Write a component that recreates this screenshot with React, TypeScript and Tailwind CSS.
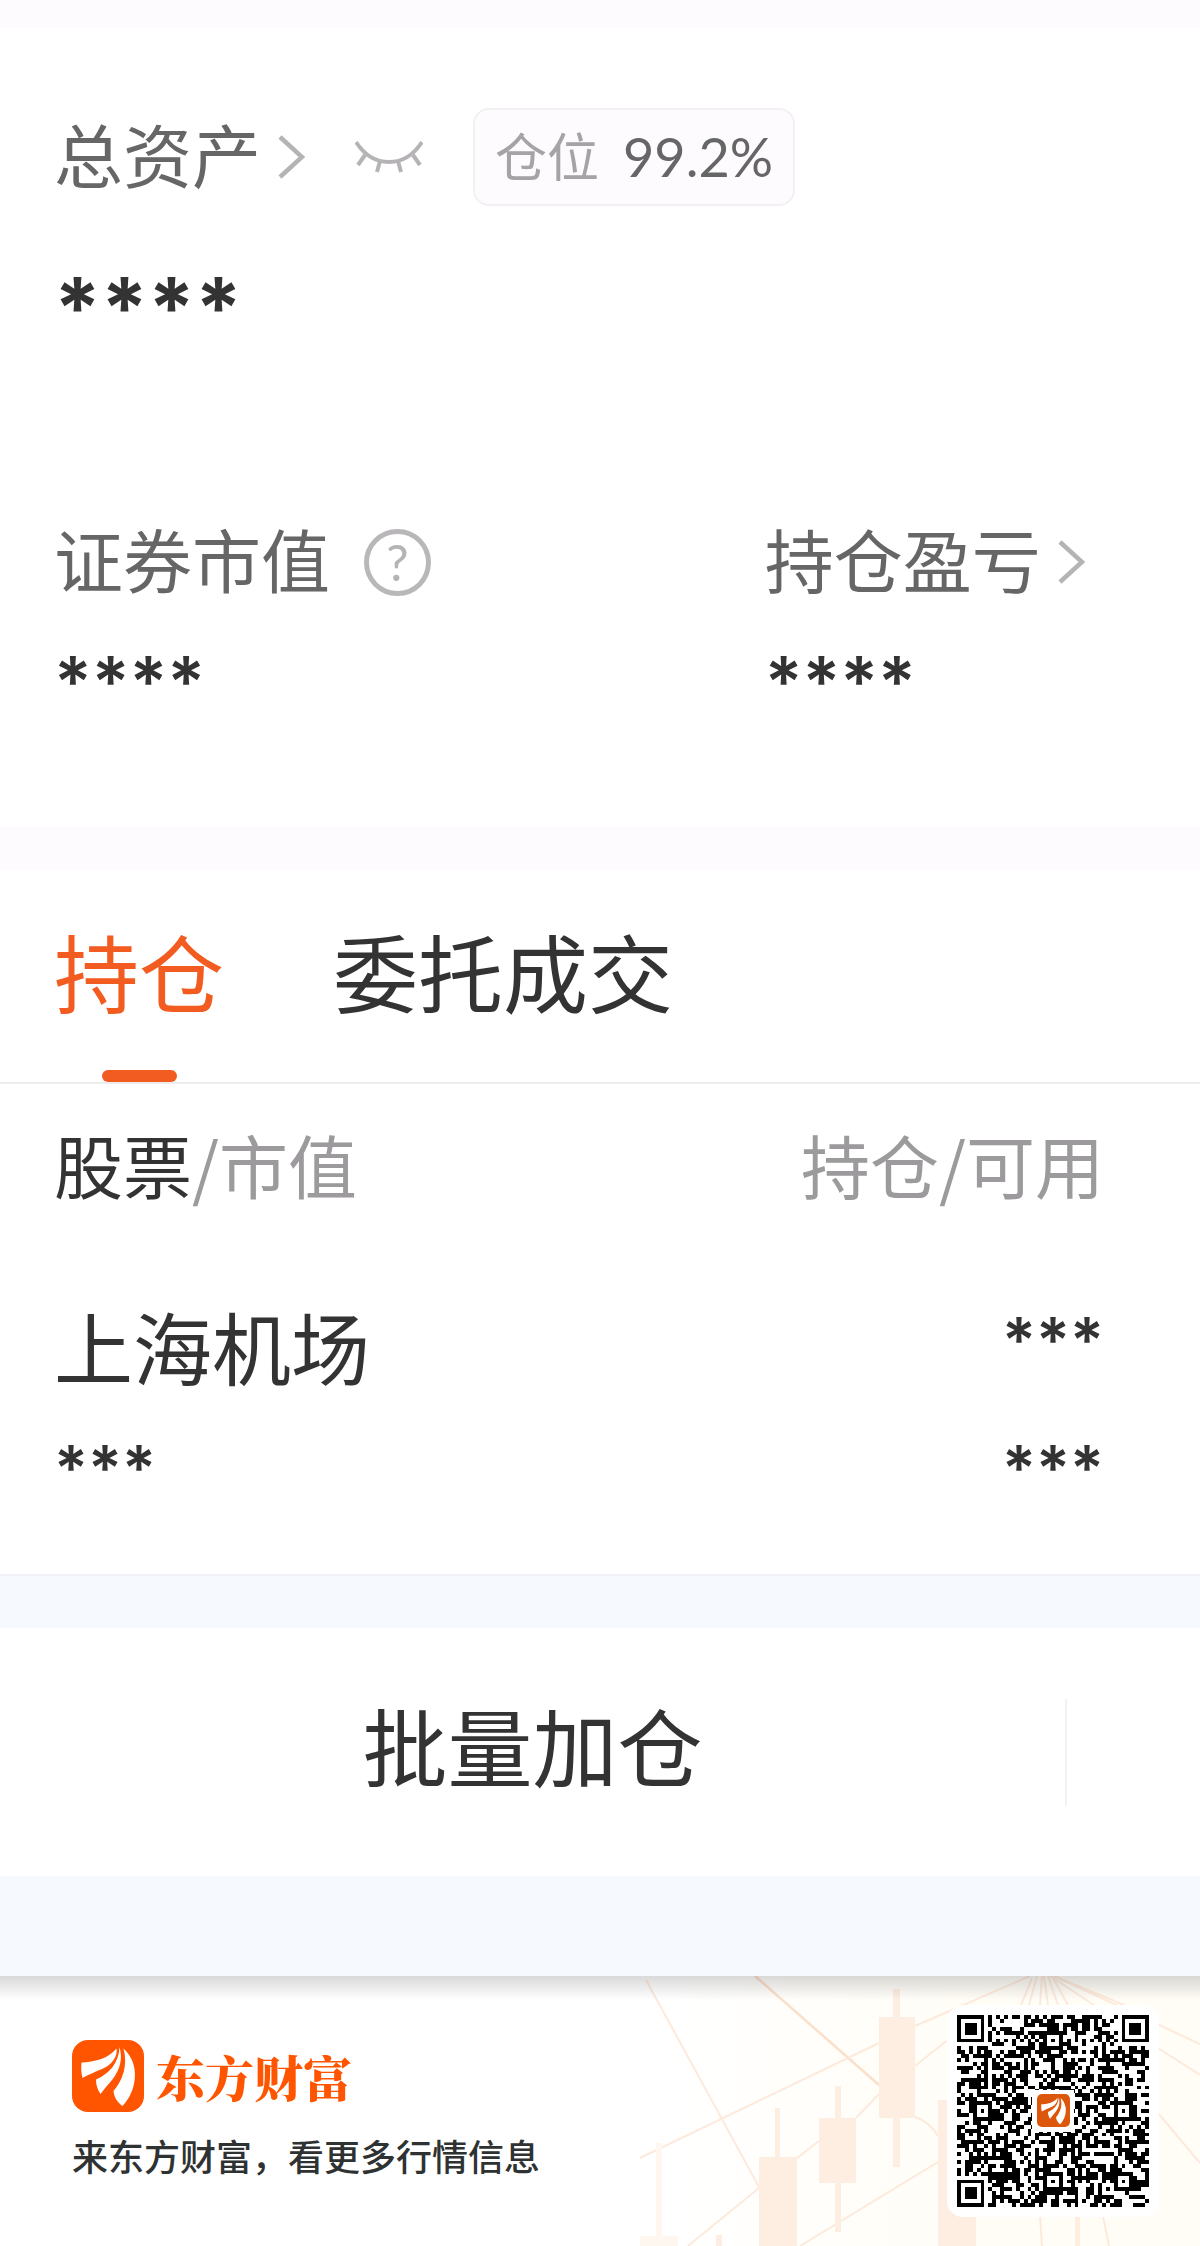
const QR_SIZE = 49;

function inSquare(x: number, y: number, cx: number, cy: number, r: number) {
  return Math.max(Math.abs(x - cx), Math.abs(y - cy)) <= r;
}

function isDark(x: number, y: number) {
  // finder patterns
  for (const [cx, cy] of [[3, 3], [45, 3], [3, 45]]) {
    if (inSquare(x, y, cx, cy, 4)) {
      const d = Math.max(Math.abs(x - cx), Math.abs(y - cy));
      return d !== 4 && d !== 2;
    }
  }
  // alignment patterns
  for (const [cx, cy] of [[24, 6], [6, 24], [42, 24], [24, 42], [42, 42]]) {
    if (inSquare(x, y, cx, cy, 2)) {
      return Math.max(Math.abs(x - cx), Math.abs(y - cy)) !== 1;
    }
  }
  if (x === 6 || y === 6) return (x + y) % 2 === 0;
  let h = (x * 374761393 + y * 668265263 + 1013) | 0;
  h = Math.imul(h ^ (h >>> 13), 1274126177);
  return ((h ^ (h >>> 16)) & 255) < 130;
}

function qrPath() {
  let d = "";
  for (let y = 0; y < QR_SIZE; y++) {
    for (let x = 0; x < QR_SIZE; x++) {
      if (isDark(x, y)) d += `M${x} ${y}h1v1h-1z`;
    }
  }
  return d;
}

function Feathers() {
  return (
    <g fill="#fff">
      <path d="M9.500 22.500C22 22 36 19 44.500 8.500C46 16 40 25 30 29C23 32 18 34 10.500 38C9 33 9 27 9.500 22.500Z" />
      <path d="M47.500 7C51 19 48 30 40 40C36 45 32 49 28.500 54C25.500 50 24 45 24 39.500C37 34 47 23 47.500 7Z" />
      <path d="M51.500 8.500C61 17 65 30 62 44C60 53 56 60 50.500 66C45 62 42 57 41.500 51C51 40 56 25 51.500 8.500Z" />
    </g>
  );
}

function Logo() {
  return (
    <svg viewBox="0 0 72 72" className="h-18 w-18 shrink-0" aria-hidden="true">
      <rect width="72" height="72" rx="16" fill="#ff5500" />
      <Feathers />
    </svg>
  );
}

function QrCode() {
  return (
    <div className="rounded-2xl bg-white p-[10px]">
      <svg viewBox="0 0 192 192" className="h-48 w-48" role="img" aria-label="二维码">
        <path d={qrPath()} transform="scale(3.918)" shapeRendering="crispEdges" />
        <rect x="75" y="75" width="42" height="42" fill="#fff" />
        <g transform="translate(80 79) scale(0.458)">
          <rect width="72" height="72" rx="11" fill="#dc560c" />
          <Feathers />
        </g>
      </svg>
    </div>
  );
}

function Chevron() {
  return (
    <svg viewBox="0 0 28 44" className="h-11 w-7" fill="none" stroke="#b5b3b5" strokeWidth="4.500" aria-hidden="true">
      <path d="M3 2L25 22L3 42" />
    </svg>
  );
}

function ClosedEye() {
  return (
    <svg viewBox="0 0 68 34" className="h-[34px] w-[68px]" fill="none" stroke="#b5b3b5" strokeWidth="4" aria-hidden="true">
      <path d="M1 2C10 16 21 22 34 22S58 16 67 2" />
      <path d="M10 15L3 25M25 21L22 32M43 21L46 32M58 15L65 25" />
    </svg>
  );
}

function FooterArt() {
  return (
    <svg viewBox="0 0 600 270" className="absolute right-0 top-0 h-full w-[600px]" aria-hidden="true">
      <defs>
        <linearGradient id="warm" x1="0" x2="1" y1="0" y2="0">
          <stop offset="0.100" stopColor="#fffdf6" stopOpacity="0" />
          <stop offset="0.600" stopColor="#fffdf6" />
        </linearGradient>
      </defs>
      <rect width="600" height="270" fill="url(#warm)" />
      <g fill="none" stroke="#fdeadc" strokeWidth="2">
        <path d="M155 0L279 109" stroke="#fcdfc9" strokeWidth="2.500" />
        <path d="M46 4L159 211" />
        <path d="M40 182L279 67M315 50L430 0" />
        <path d="M88 270L159 212M197 182L219 165M256 142L279 118M315 90L350 62" />
        <path d="M200 270L338 186M315 141Q330 146 338 160" />
        <path d="M432 2L421 29M437 0L429 29M442 0L440 29M444 0L448 29M448 0L458 29M452 0L468 29M450 0L494 29M454 0L524 29" />
        <path d="M454 0L600 68M558 72L600 99M558 137L600 187M440 240L442 270M503 240L509 270" />
      </g>
      <g fill="#feeee2">
        <path d="M293 13h7v28h15v101h-15v49h-7v-49h-14V41h14z" />
        <path d="M235 110h6v32h15v65h-15v49h-6v-49h-16v-65h16z" />
        <path d="M175 132h5v49h17v89h-38v-89h16z" />
        <path d="M338 124h38v146h-38z" />
        <path d="M116 259h6v11h-6zM475 240h5v30h-5z" />
      </g>
      <path d="M56 167h6v93h16v10H40v-10h16z" fill="#fef7f0" />
    </svg>
  );
}

export default function App() {
  return (
    <div className="min-h-screen bg-white font-['Noto_Sans_CJK_SC',sans-serif] text-[#333]">
      <div className="h-7 bg-[#fefbff]" />

      <section className="pb-[85px] pl-[54px] pr-20 pt-20 text-[#666]">
        <div className="flex items-center gap-[50px]">
          <button className="flex items-center gap-4 text-[69px] leading-[88px]">
            <span className="pb-2">总资产</span>
            <Chevron />
          </button>
          <button aria-label="显示资产">
            <ClosedEye />
          </button>
          <p className="flex h-[98px] items-center gap-6 rounded-2xl border-2 border-[#f3f0f3] bg-[#fefbff] px-5">
            <span className="pb-1 text-[52px] leading-[72px] text-[#a5a3a5]">仓位</span>
            <span className="font-['Lato',sans-serif] text-[54px] leading-[72px]">99.2%</span>
          </p>
        </div>
        <p className="pt-8 font-['Inter',sans-serif] text-[84px] font-bold leading-[140px] text-[#333]">****</p>

        <dl className="grid grid-cols-[2fr_1fr] pt-34">
          <div>
            <dt className="flex items-center gap-[34px] text-[69px] leading-[88px]">
              <span className="pb-2">证券市值</span>
              <button
                className="flex h-[67px] w-[67px] items-center justify-center rounded-full border-[5px] border-[#b9b7b9] font-['Lato',sans-serif] text-[50px] leading-[50px] text-[#b5b3b5]"
                aria-label="证券市值说明"
              >
                ?
              </button>
            </dt>
            <dd className="pt-3 font-['Inter',sans-serif] text-[70px] font-semibold leading-[120px] text-[#333]">****</dd>
          </div>
          <div>
            <dt className="text-[69px] leading-[88px]">
              <button className="flex items-center gap-4">
                <span className="pb-2">持仓盈亏</span>
                <Chevron />
              </button>
            </dt>
            <dd className="pt-3 font-['Inter',sans-serif] text-[70px] font-semibold leading-[120px] text-[#333]">****</dd>
          </div>
        </dl>
      </section>

      <div className="h-[43px] bg-[#fefbff]" />

      <nav className="flex gap-[109px] border-b-2 border-[#eeecee] px-[54px] pt-10 text-[85px] leading-[120px]" role="tablist">
        <button className="flex flex-col items-center text-[#f25c20]" role="tab" aria-selected="true">
          持仓
          <span className="mt-10 h-3 w-[75px] rounded-md bg-[#f25c20]" />
        </button>
        <button className="flex flex-col items-center" role="tab" aria-selected="false">
          委托成交
        </button>
      </nav>

      <table className="w-full border-b-2 border-[#f1f2f5] text-left">
        <thead>
          <tr className="text-[69px] leading-[96px]">
            <th className="pl-[54px] pt-8 font-normal">
              股票<span className="text-[#9c9a9c]">/市值</span>
            </th>
            <th className="pr-24 pt-8 text-right font-normal text-[#9c9a9c]">持仓/可用</th>
          </tr>
        </thead>
        <tbody>
          <tr className="align-top">
            <td className="pb-[58px] pl-[54px] pt-20">
              <p className="text-[79px] leading-[108px]">上海机场</p>
              <p className="pt-5 font-['Inter',sans-serif] text-[63px] font-semibold leading-[96px]">***</p>
            </td>
            <td className="pb-[58px] pr-24 pt-20 text-right font-['Inter',sans-serif] text-[63px] font-semibold leading-[96px]">
              <p>***</p>
              <p className="pt-8">***</p>
            </td>
          </tr>
        </tbody>
      </table>

      <div className="h-13 bg-[#f6f9fe]" />

      <div className="flex items-center">
        <button className="flex-1 pb-18 pt-14 text-[85px] leading-[120px]">批量加仓</button>
        <span className="mr-[133px] h-[107px] w-[2px] bg-[#f3f2f4]" />
      </div>

      <div className="h-25 bg-[#f6f9fe]" />

      <footer className="relative flex items-center justify-between overflow-hidden py-[29px] pl-18 pr-[41px]">
        <FooterArt />
        <div className="absolute inset-x-0 top-0 h-6 bg-linear-to-b from-black/15 to-transparent" />
        <div className="relative">
          <div className="flex items-center gap-3">
            <Logo />
            <strong className="font-['Noto_Serif_CJK_SC','Noto_Sans_CJK_SC',serif] text-[49px] font-black leading-[72px] text-[#ff5500]">
              东方财富
            </strong>
          </div>
          <p className="pt-4 text-4xl font-medium leading-[54px] text-[#2f3232]">来东方财富，看更多行情信息</p>
        </div>
        <div className="relative">
          <QrCode />
        </div>
      </footer>
    </div>
  );
}
